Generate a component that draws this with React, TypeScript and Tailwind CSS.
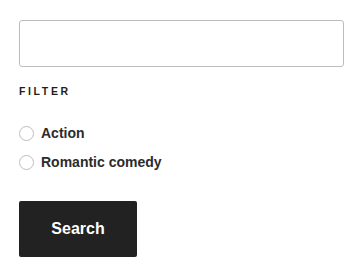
export default function App() {
  return (
    <div className="min-h-screen bg-white pl-[19px] pr-[18px] pt-[20px] font-['Liberation_Sans',Arial,sans-serif] text-[#222]">
      <input
        type="text"
        className="block h-[47px] w-[325px] rounded-[3px] border border-[#bdbdbd] bg-white px-3"
      />
      <div className="mt-[19px] text-[10.5px] font-black uppercase leading-none tracking-[0.25em] text-[#1e1e1e]">
        Filter
      </div>
      <div className="mt-[29px] flex flex-col gap-[14px]">
        {['Action', 'Romantic comedy'].map((label) => (
          <label key={label} className="flex items-center gap-[7px]">
            <span className="block h-[15px] w-[15px] rounded-full border border-[#bdbdbd] bg-white" />
            <span className="text-[14px] font-bold leading-[15px] text-[#2b2b2b]">{label}</span>
          </label>
        ))}
      </div>
      <button className="mt-[31px] h-[56px] w-[118px] rounded-[2px] bg-[#222222] text-[16px] font-bold text-white">
        Search
      </button>
    </div>
  );
}
